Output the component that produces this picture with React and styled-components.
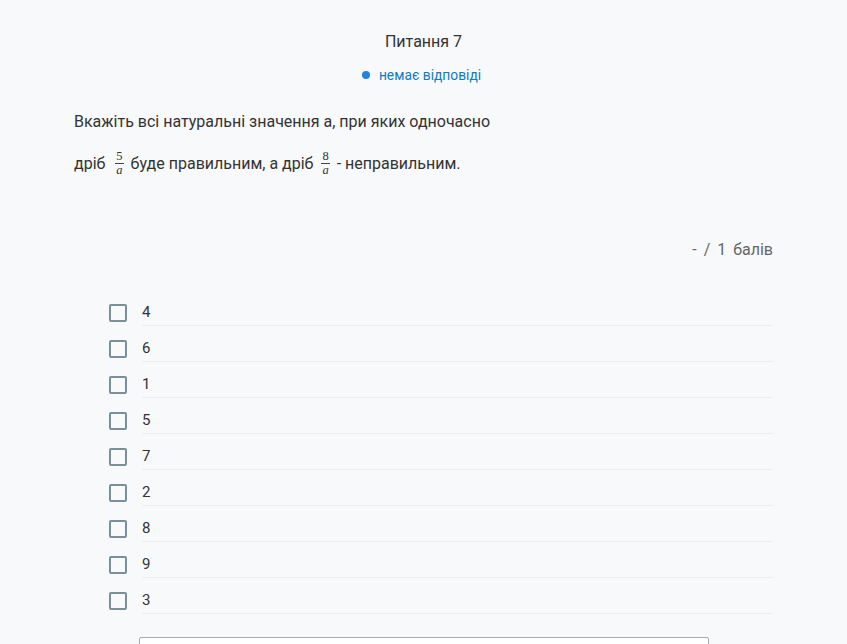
import React from "react";
import styled, { createGlobalStyle } from "styled-components";

const Global = createGlobalStyle`
  html, body { margin: 0; padding: 0; background: #f8f9fb; }
  body { font-family: Roboto, "Noto Sans", Arial, sans-serif; color: #333; }
`;

const Page = styled.div`
  width: 699px;
  margin: 0 auto;
  padding-top: 32px;
`;

const Title = styled.div`
  text-align: center;
  font-size: 16px;
  line-height: 20px;
  color: #333;
`;

const Status = styled.div`
  margin-top: 13px;
  display: flex;
  justify-content: center;
  align-items: center;
  gap: 9px;
  font-size: 13.8px;
  line-height: 20px;
  color: #1479bd;
  padding-right: 4px;
`;

const Dot = styled.span`
  width: 8px;
  height: 8px;
  border-radius: 50%;
  background: #1c86e0;
`;

const Question = styled.p`
  margin: 16px 0 0;
  font-size: 16px;
  line-height: 42px;
  color: #333;
`;

const Frac = styled.span`
  display: inline-flex;
  flex-direction: column;
  align-items: center;
  vertical-align: middle;
  margin: 0 7px 0 ${(p) => p.$ml || 4}px;
  font-family: "Liberation Serif", "DejaVu Serif", serif;
  font-size: 12.5px;
  line-height: 11px;
  position: relative;
  top: -1px;
`;

const Num = styled.span`
  padding: 0 1px 1px;
  border-bottom: 1px solid #444;
`;

const Den = styled.span`
  font-style: italic;
  padding-top: 1px;
`;

const Score = styled.div`
  margin-top: 55px;
  text-align: right;
  font-size: 16px;
  line-height: 20px;
  color: #666;
  word-spacing: 3px;
`;

const List = styled.div`
  margin-top: 30px;
  padding-left: 35px;
  display: flex;
  flex-direction: column;
`;

const Row = styled.label`
  display: flex;
  align-items: flex-start;
  gap: 15px;
`;

const Box = styled.span`
  flex: none;
  margin-top: 14px;
  width: 14px;
  height: 14px;
  border: 2px solid #7a8f99;
  border-radius: 2px;
`;

const Label = styled.span`
  flex: 1;
  padding: 12px 0 3px;
  font-size: 15px;
  line-height: 20px;
  color: #333;
  border-bottom: 1px solid #eceef1;
`;

const Answer = styled.div`
  margin: 23px 0 0 65px;
  width: 568px;
  height: 40px;
  background: #fff;
  border: 1px solid #aaa;
  border-radius: 2px;
`;

const options = ["4", "6", "1", "5", "7", "2", "8", "9", "3"];

export default function App() {
  return (
    <>
      <Global />
      <Page>
        <Title>Питання 7</Title>
        <Status>
          <Dot />
          <span>немає відповіді</span>
        </Status>
        <Question>
          Вкажіть всі натуральні значення а, при яких одночасно
          <br />
          дріб <Frac $ml={6}><Num>5</Num><Den>a</Den></Frac>буде правильним, а дріб <Frac><Num>8</Num><Den>a</Den></Frac>- неправильним.
        </Question>
        <Score>- / 1 балів</Score>
        <List>
          {options.map((o) => (
            <Row key={o}>
              <Box />
              <Label>{o}</Label>
            </Row>
          ))}
        </List>
        <Answer />
      </Page>
    </>
  );
}
